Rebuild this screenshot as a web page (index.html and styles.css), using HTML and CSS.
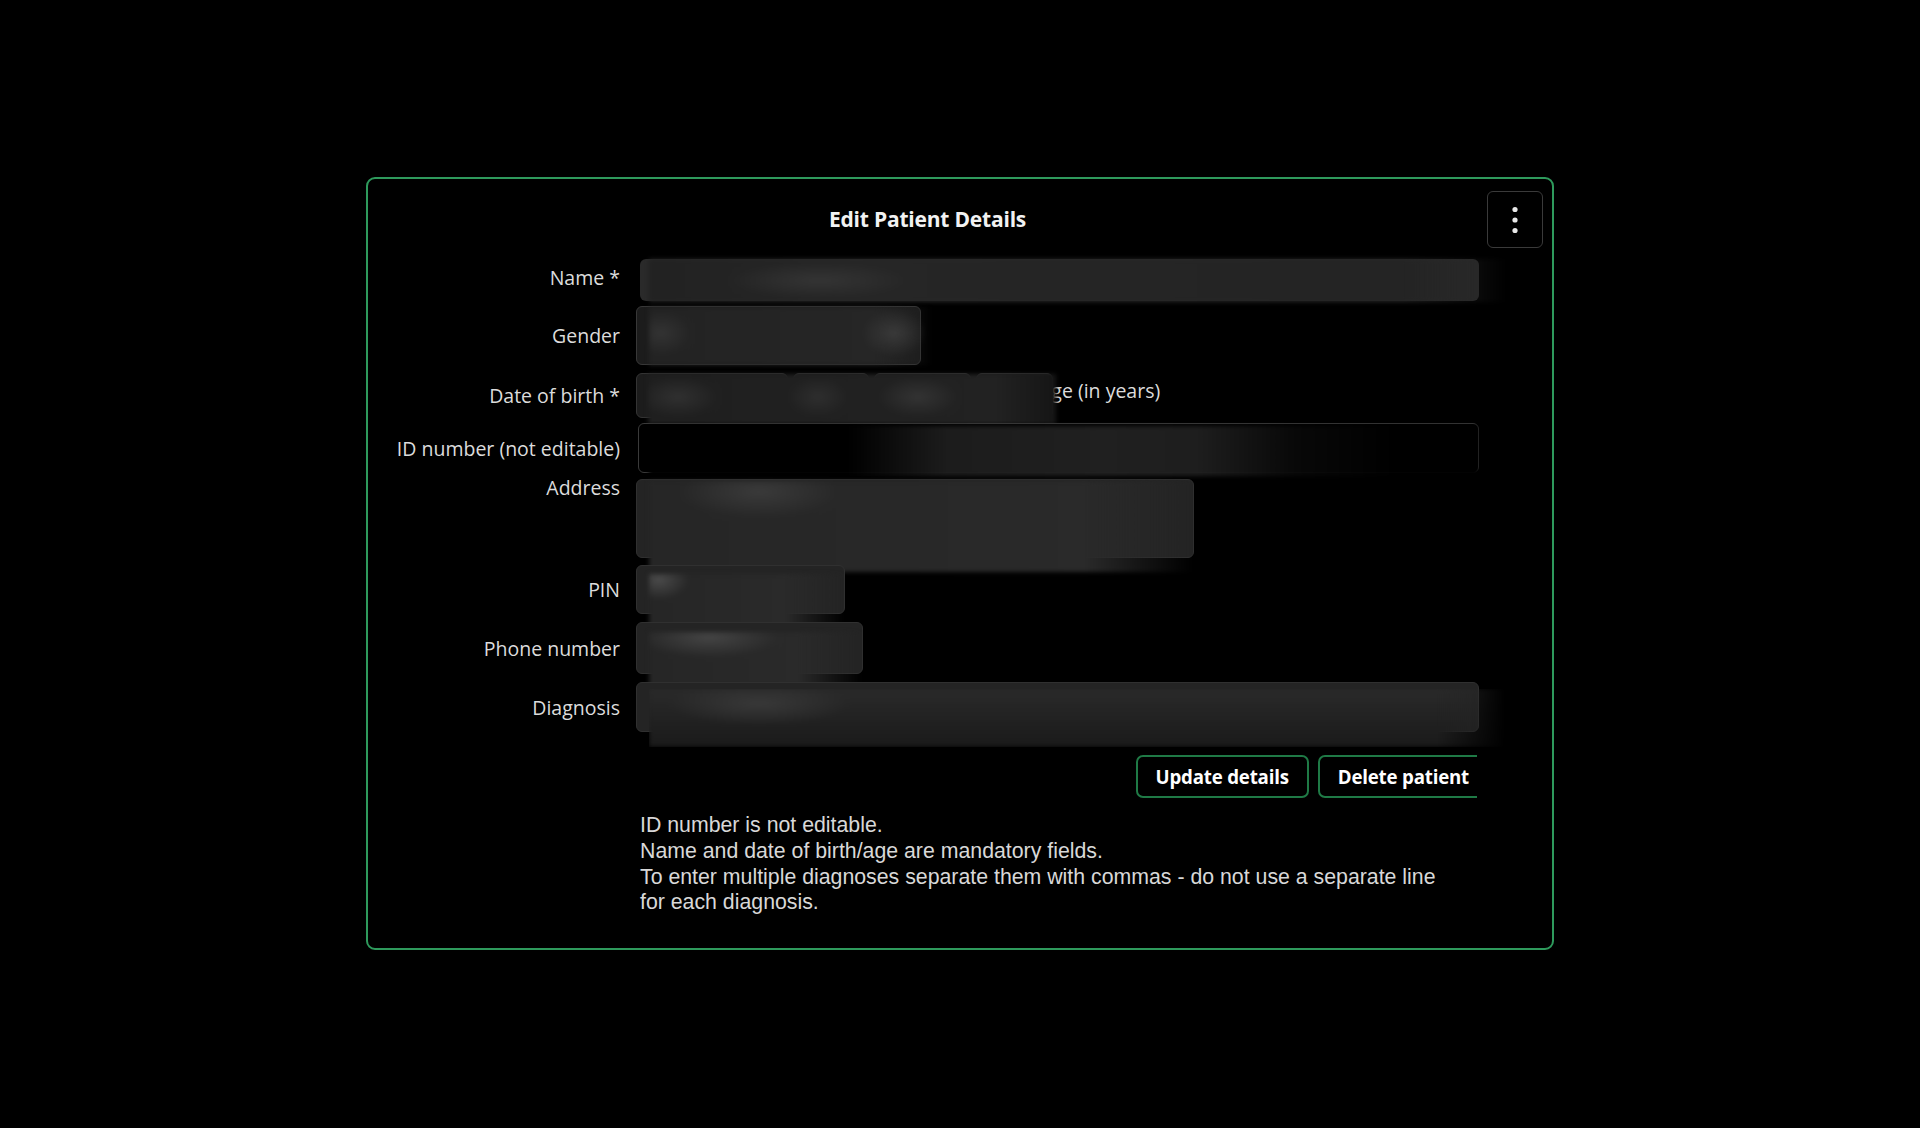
FILE: index.html
```html
<!DOCTYPE html>
<html lang="en">
<head>
<meta charset="utf-8">
<title>Edit Patient Details</title>
<link rel="stylesheet" href="styles.css">
</head>
<body>
<div class="card">
  <div class="header">
    <h1 class="title">Edit Patient Details</h1>
    <button class="kebab" aria-label="More options">
      <svg width="8" height="28" viewBox="0 0 8 28"><circle cx="4" cy="3.5" r="2.6" fill="#e8e8e8"/><circle cx="4" cy="14" r="2.6" fill="#e8e8e8"/><circle cx="4" cy="24.5" r="2.6" fill="#e8e8e8"/></svg>
    </button>
  </div>
  <form class="form">
    <div class="row r-name">
      <label class="lbl lbl-name">Name *</label>
      <div class="field f-name"></div>
    </div>
    <div class="row r-gender">
      <label class="lbl">Gender</label>
      <div class="field f-gender"></div>
    </div>
    <div class="row r-dob">
      <label class="lbl">Date of birth *</label>
      <div class="dob">
        <div class="dob-boxes">
          <div class="box b-day"></div>
          <div class="box b-month"></div>
          <div class="box b-year"></div>
          <div class="box b-age"></div>
        </div>
        <span class="age-lbl">Age (in years)</span>
      </div>
    </div>
    <div class="row r-id">
      <label class="lbl">ID number (not editable)</label>
      <div class="field f-id"></div>
    </div>
    <div class="row r-address">
      <label class="lbl lbl-top">Address</label>
      <div class="field f-address"></div>
    </div>
    <div class="row r-pin">
      <label class="lbl">PIN</label>
      <div class="field f-pin"></div>
    </div>
    <div class="row r-phone">
      <label class="lbl">Phone number</label>
      <div class="field f-phone"></div>
    </div>
    <div class="row r-diag">
      <label class="lbl">Diagnosis</label>
      <div class="field f-diag"></div>
    </div>
    <div class="actions">
      <div class="btns">
        <button type="button" class="btn">Update details</button>
        <button type="button" class="btn">Delete patient</button>
      </div>
    </div>
  </form>
  <div class="notes">
    ID number is not editable.<br>
    Name and date of birth/age are mandatory fields.<br>
    To enter multiple diagnoses separate them with commas - do not use a separate line for each diagnosis.
  </div>
</div>
</body>
</html>
```

FILE: styles.css
```css
html, body {
  margin: 0;
  padding: 0;
  background: #000;
}
body {
  min-height: 100vh;
  display: flex;
  align-items: center;
  justify-content: center;
  font-family: "Open Sans", "Noto Sans", sans-serif;
  color: #dedede;
}
.card {
  box-sizing: border-box;
  width: 1188px;
  border: 2px solid #2e9a5c;
  border-radius: 9px;
  background: #000;
  padding: 12px 9px 32px 0;
  margin-top: -1px;
}
.header {
  display: flex;
  align-items: center;
  height: 57px;
}
.title {
  flex: 1;
  margin: 0 0 2px;
  text-align: center;
  font-size: 21px;
  font-weight: 700;
  color: #f2f2f2;
  letter-spacing: -0.2px;
}
.kebab {
  box-sizing: border-box;
  width: 56px;
  height: 57px;
  border: 1px solid #3a3a3a;
  border-radius: 6px;
  background: #000;
  display: flex;
  align-items: center;
  justify-content: center;
  padding: 0;
}
.form {
  margin-top: 11px;
}
.row {
  display: flex;
  align-items: center;
}
.lbl {
  box-sizing: border-box;
  width: 268px;
  padding-right: 16px;
  padding-top: 1px;
  text-align: right;
  font-size: 19.5px;
  line-height: 24px;
  color: #dcdcdc;
  flex-shrink: 0;
}
.lbl-name {
  margin-bottom: 5px;
}
.lbl-top {
  align-self: flex-start;
  line-height: 16px;
  padding-top: 1px;
}

/* input boxes */
.field, .box {
  position: relative;
  box-sizing: border-box;
  height: 100%;
  border: 1px solid #343434;
  border-radius: 6px;
  background: #1c1c1c;
}
/* privacy blur laid over the typed values */
.field::after, .dob-boxes::after {
  content: "";
  position: absolute;
  left: 12px;
  filter: blur(2px);
}
.r-name { height: 42px; margin-bottom: 5px; }
.r-gender { height: 59px; margin-bottom: 8px; }
.r-dob { height: 45px; margin-bottom: 5px; }
.r-id { height: 50px; margin-bottom: 6px; }
.r-address { height: 79px; margin-bottom: 7px; }
.r-pin { height: 49px; margin-bottom: 8px; }
.r-phone { height: 52px; margin-bottom: 8px; }
.r-diag { height: 50px; margin-bottom: 23px; }

.f-name {
  width: 839px;
  margin-left: 4px;
  border: none;
  background: #2a2a2a;
}
.f-name::after {
  left: 9px;
  top: 0; bottom: -1px; right: -27px;
  background:
    radial-gradient(ellipse 90px 18px at 170px 50%, #343434, rgba(52,52,52,0) 100%),
    linear-gradient(to right, #222, #262626 25%, #242424 88%, rgba(36,36,36,0));
}
.f-gender { width: 285px; border-color: #383838; }
.f-gender::after {
  top: 0; bottom: -1px; right: -12px;
  background:
    radial-gradient(ellipse 30px 22px at 12px 45%, #333, rgba(51,51,51,0) 100%),
    radial-gradient(ellipse 32px 24px at 245px 45%, #3a3a3a, rgba(58,58,58,0) 100%),
    linear-gradient(to right, #232323, #262626 80%, rgba(30,30,30,0));
}
.dob {
  display: flex;
  align-items: center;
  height: 100%;
}
.dob-boxes {
  position: relative;
  display: flex;
  gap: 5px;
  height: 100%;
}
.dob-boxes::after {
  top: 1px; bottom: -7px; right: -3px;
  background:
    radial-gradient(ellipse 40px 20px at 30px 45%, #303030, rgba(48,48,48,0) 100%),
    radial-gradient(ellipse 30px 20px at 170px 45%, #2e2e2e, rgba(46,46,46,0) 100%),
    radial-gradient(ellipse 40px 20px at 270px 45%, #333, rgba(51,51,51,0) 100%),
    linear-gradient(to right, #1f1f1f, #222 85%, #151515);
}
.b-day { width: 152px; }
.b-month { width: 76px; }
.b-year { width: 97px; }
.b-age { width: 77px; }
.age-lbl {
  margin-left: -14px;
  margin-bottom: 11px;
  font-size: 19.5px;
  color: #dcdcdc;
}
.f-id {
  width: 841px;
  margin-left: 2px;
  background: #000;
  border-color: #3a3a3a;
}
.f-id::after {
  left: 10px;
  top: 2px; bottom: -4px; right: 0;
  background: linear-gradient(to right, #000 24%, #1c1c1c 36%, #202020 55%, #1e1e1e 66%, #080808 78%, #000 90%);
}
.f-address, .f-pin, .f-phone, .f-diag {
  background: #242424;
  border-color: #303030;
}
.f-address { width: 558px; }
.f-address::after {
  top: 1px; bottom: -15px; right: 0;
  background:
    radial-gradient(ellipse 80px 26px at 110px 12%, #3a3a3a, rgba(58,58,58,0) 100%),
    linear-gradient(to right, #262626, #2a2a2a 80%, rgba(30,30,30,0));
}
.f-pin { width: 209px; }
.f-pin::after {
  top: 8px; bottom: -18px; right: 0;
  background:
    radial-gradient(ellipse 30px 20px at 10px 10%, #4a4a4a, rgba(74,74,74,0) 100%),
    linear-gradient(to right, #262626, #2a2a2a 70%, rgba(20,20,20,0));
}
.f-phone { width: 227px; }
.f-phone::after {
  top: 9px; bottom: -13px; right: 0;
  background:
    radial-gradient(ellipse 70px 20px at 60px 10%, #444, rgba(68,68,68,0) 100%),
    linear-gradient(to right, #262626, #2a2a2a 70%, rgba(20,20,20,0));
}
.f-diag { width: 843px; }
.f-diag::after {
  top: 6px; bottom: -16px; right: -27px;
  background:
    radial-gradient(ellipse 90px 22px at 110px 25%, #383838, rgba(56,56,56,0) 100%),
    linear-gradient(to bottom, #2a2a2a, #1a1a1a),
    #222;
  -webkit-mask-image: linear-gradient(to right, #000 92%, transparent);
  mask-image: linear-gradient(to right, #000 92%, transparent);
}

.actions {
  margin-left: 268px;
  width: 841px;
  height: 43px;
  overflow: hidden;
  display: flex;
  justify-content: flex-end;
}
.btns {
  display: flex;
  gap: 9px;
  margin-right: -12px;
  flex-shrink: 0;
}
.btn {
  box-sizing: border-box;
  height: 43px;
  padding: 0 18px;
  border: 2px solid #1f7a46;
  border-radius: 7px;
  background: #000;
  color: #fff;
  font-family: "Open Sans", "Noto Sans", sans-serif;
  font-size: 18.7px;
  font-weight: 700;
  letter-spacing: -0.2px;
}
.notes {
  margin: 15px 0 0 272px;
  width: 815px;
  font-family: "Liberation Sans", Arial, sans-serif;
  font-size: 21.3px;
  line-height: 25.7px;
  color: #d8d8d8;
}
```
